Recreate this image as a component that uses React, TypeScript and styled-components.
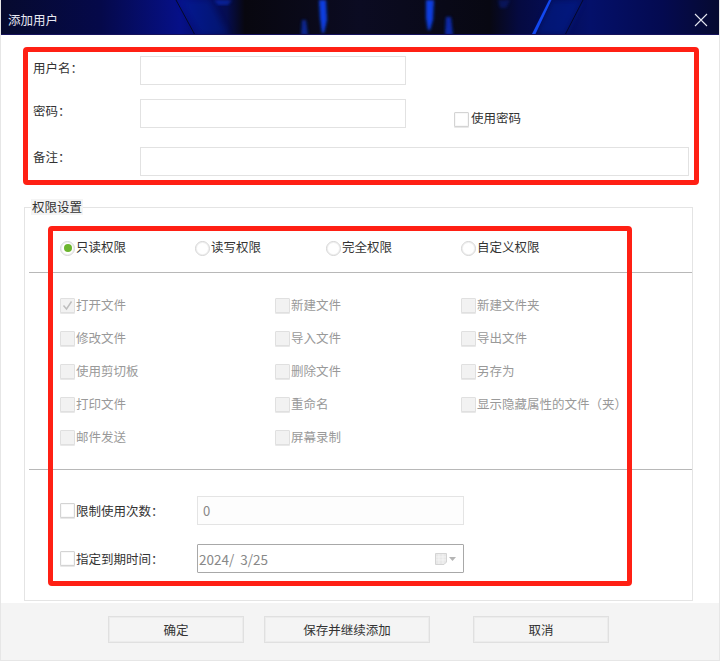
import styled, { createGlobalStyle } from "styled-components";

const FONT = `"Noto Sans CJK SC", "Inter", "Liberation Sans", sans-serif`;

const radios = [
  { label: "只读权限", checked: true },
  { label: "读写权限", checked: false },
  { label: "完全权限", checked: false },
  { label: "自定义权限", checked: false },
];

const permissions = [
  { label: "打开文件", checked: true },
  { label: "新建文件" },
  { label: "新建文件夹" },
  { label: "修改文件" },
  { label: "导入文件" },
  { label: "导出文件" },
  { label: "使用剪切板" },
  { label: "删除文件" },
  { label: "另存为" },
  { label: "打印文件" },
  { label: "重命名" },
  { label: "显示隐藏属性的文件（夹）" },
  { label: "邮件发送" },
  { label: "屏幕录制" },
];

function TitleArt() {
  return (
    <ArtSvg viewBox="0 0 720 35" preserveAspectRatio="none" aria-hidden="true">
      <defs>
        <linearGradient id="base" x1="0" x2="1" y1="0" y2="0">
          <stop offset="0" stopColor="#060a2e" />
          <stop offset="0.14" stopColor="#05094a" />
          <stop offset="0.25" stopColor="#061088" />
          <stop offset="0.315" stopColor="#050d50" />
          <stop offset="0.34" stopColor="#08070f" />
          <stop offset="0.5" stopColor="#0b0b22" />
          <stop offset="0.68" stopColor="#080812" />
          <stop offset="0.72" stopColor="#050a40" />
          <stop offset="0.82" stopColor="#04106a" />
          <stop offset="0.92" stopColor="#040a50" />
          <stop offset="1" stopColor="#060a30" />
        </linearGradient>
        <filter id="soft" x="-50%" y="-20%" width="200%" height="140%">
          <feGaussianBlur stdDeviation="1.6" />
        </filter>
        <filter id="faint" x="-20%" y="-20%" width="140%" height="140%">
          <feGaussianBlur stdDeviation="3" />
        </filter>
      </defs>
      <rect width="720" height="35" fill="url(#base)" />
      <path d="M180 0 L200 35 L228 35 L210 0 Z" fill="#0626a8" opacity="0.35" filter="url(#faint)" />
      <path d="M176 0 L195 35" stroke="#060a28" strokeWidth="1" fill="none" />
      <path d="M214 0 h18 l-4 5 h-10 Z" fill="#0a36d8" opacity="0.5" filter="url(#soft)" />
      <path d="M319 0 h7 l1 20 l-3 13 h-2 l-2 -15 Z" fill="#0a3ee0" filter="url(#soft)" />
      <path d="M302 20 h4 l2 15 h-7 Z" fill="#0a2eb0" opacity="0.8" filter="url(#soft)" />
      <path d="M426 0 h8 l-1 20 l-3 10 h-2 l-2 -12 Z" fill="#0a3ee0" filter="url(#soft)" />
      <path d="M446 17 h5 l2 18 h-8 Z" fill="#0a2ec0" opacity="0.85" filter="url(#soft)" />
      <path d="M498 0 h12 l-4 8 h-6 Z" fill="#0a28a0" opacity="0.4" filter="url(#soft)" />
      <path d="M552 0 H582 L565 35 H535 Z" fill="#0620a0" opacity="0.45" filter="url(#faint)" />
      <path d="M549 0 h2.5 L535 35 h-3.5 Z" fill="#1248f0" />
      <path d="M583 0 L565 35" stroke="#05082a" strokeWidth="1" fill="none" />
      <rect y="34" width="720" height="1" fill="#16125c" />
    </ArtSvg>
  );
}

function CalendarIcon() {
  return (
    <svg width="22" height="12" viewBox="0 0 22 12" aria-hidden="true">
      <path d="M0.5 0.5 H11.5 V9 L9 11.5 H0.5 Z" fill="#e8e8e8" stroke="#d4d4d4" />
      <path d="M1 4 H11 M1 7 H11 M4 1 V11 M8 1 V11" stroke="#f6f6f6" strokeWidth="0.8" />
      <path d="M14 4 H21 L17.5 8 Z" fill="#b5b5b5" />
    </svg>
  );
}

export default function App() {
  return (
    <>
      <GlobalStyle />
      <Window>
        <TitleBar>
          <TitleArt />
          <TitleText>添加用户</TitleText>
          <CloseIcon viewBox="0 0 14 14" aria-hidden="true">
            <path d="M1 1 L13 13 M13 1 L1 13" stroke="#e4e6f0" strokeWidth="1.1" fill="none" />
          </CloseIcon>
        </TitleBar>

        <Body>
          <FormSection>
            <FormFrame />
            <FormRow>
              <FieldLabel $offset={4}>用户名：</FieldLabel>
              <TextBox />
            </FormRow>
            <FormRow $gap={14}>
              <FieldLabel $offset={4}>密码：</FieldLabel>
              <TextBox />
              <UsePassword>
                <CheckBox />
                <OptionText>使用密码</OptionText>
              </UsePassword>
            </FormRow>
            <FormRow $gap={19}>
              <FieldLabel $offset={2}>备注：</FieldLabel>
              <TextBox $wide />
            </FormRow>
          </FormSection>

          <GroupBox>
            <GroupLegend>权限设置</GroupLegend>
            <PermissionFrame />
            <RadioRow>
              {radios.map((r) => (
                <Option key={r.label}>
                  <Radio $checked={r.checked} />
                  <OptionText>{r.label}</OptionText>
                </Option>
              ))}
            </RadioRow>
            <Divider $top={14} />
            <PermissionGrid>
              {permissions.map((p) => (
                <Option key={p.label} $muted>
                  <CheckBox $muted>
                    {p.checked && (
                      <svg width="13" height="13" viewBox="0 0 13 13" aria-hidden="true">
                        <path d="M2.5 6.5 L5.5 10 L10.5 2.5" stroke="#bdbdbd" strokeWidth="1.4" fill="none" />
                      </svg>
                    )}
                  </CheckBox>
                  <OptionText>{p.label}</OptionText>
                </Option>
              ))}
            </PermissionGrid>
            <Divider $top={15} />
            <LimitRow $top={26}>
              <LimitLabel>
                <CheckBox />
                <span>限制使用次数：</span>
              </LimitLabel>
              <CountBox>0</CountBox>
            </LimitRow>
            <LimitRow $top={19}>
              <LimitLabel>
                <CheckBox />
                <span>指定到期时间：</span>
              </LimitLabel>
              <DateBox>
                <span>2024/&nbsp;&nbsp;3/25</span>
                <CalendarIcon />
              </DateBox>
            </LimitRow>
          </GroupBox>
        </Body>

        <Footer>
          <FooterButton $width={136}>确定</FooterButton>
          <FooterButton $width={166}>保存并继续添加</FooterButton>
          <FooterButton $width={136}>取消</FooterButton>
        </Footer>
      </Window>
    </>
  );
}

const GlobalStyle = createGlobalStyle`
  html, body {
    margin: 0;
    padding: 0;
    background: #fff;
  }
  * {
    box-sizing: border-box;
  }
`;

const Window = styled.div`
  width: 720px;
  height: 661px;
  display: flex;
  flex-direction: column;
  border: 1px solid #e6e6e6;
  border-top: none;
  font-family: ${FONT};
  font-size: 12.5px;
  color: #333;
  overflow: hidden;
`;

const TitleBar = styled.div`
  position: relative;
  height: 35px;
  flex: none;
  margin: 0 -1px;
  display: flex;
  align-items: center;
  justify-content: space-between;
  padding: 5px 18px 0 8px;
`;

const ArtSvg = styled.svg`
  position: absolute;
  inset: 0;
  width: 100%;
  height: 100%;
`;

const TitleText = styled.span`
  position: relative;
  color: #e8e8f2;
  font-size: 12.5px;
  line-height: 16px;
`;

const CloseIcon = styled.svg`
  position: relative;
  width: 14px;
  height: 14px;
  margin-bottom: 1px;
  margin-right: -6px;
`;

const Body = styled.div`
  flex: none;
  display: flex;
  flex-direction: column;
`;

const FormSection = styled.section`
  position: relative;
  padding: 21px 0 0 32px;
  height: 172px;
  flex: none;
`;

const RedFrame = styled.div`
  position: absolute;
  border: 5.6px solid #ff2014;
  border-radius: 4px;
  pointer-events: none;
  z-index: 2;
`;

const FormFrame = styled(RedFrame)`
  left: 22px;
  top: 12px;
  width: 676px;
  height: 138px;
`;

const FormRow = styled.div<{ $gap?: number }>`
  display: flex;
  align-items: flex-start;
  margin-top: ${(p) => p.$gap ?? 0}px;
`;

const FieldLabel = styled.label<{ $offset: number }>`
  width: 107px;
  flex: none;
  padding-top: ${(p) => p.$offset}px;
  line-height: 16px;
`;

const TextBox = styled.div<{ $wide?: boolean }>`
  width: ${(p) => (p.$wide ? 549 : 266)}px;
  height: 29px;
  background: #fff;
  border: 1px solid #e2e2e2;
`;

const UsePassword = styled.div`
  display: flex;
  align-items: center;
  gap: 2px;
  margin: 11px 0 0 48px;
  line-height: 16px;
`;

const CheckBox = styled.span<{ $muted?: boolean }>`
  width: 15px;
  height: 15px;
  flex: none;
  display: inline-flex;
  align-items: center;
  justify-content: center;
  border: 1px solid ${(p) => (p.$muted ? "#e0e0e0" : "#d4d4d4")};
  border-radius: 1px;
  background: ${(p) => (p.$muted ? "#f2f2f2" : "#fff")};
  box-shadow: inset 0 0 0 0.5px #f2f2f2, 0 1px 0 #e8e8e8;
`;

const GroupBox = styled.section`
  position: relative;
  flex: none;
  width: 669px;
  height: 394px;
  margin-left: 23px;
  border: 1px solid #e4e4e4;
  padding-top: 30px;
`;

const GroupLegend = styled.span`
  position: absolute;
  left: 6px;
  top: -9px;
  padding: 0 1px;
  background: #f4f4f4;
  line-height: 16px;
`;

const PermissionFrame = styled(RedFrame)`
  left: 23px;
  top: 18px;
  width: 584px;
  height: 360px;
`;

const RadioRow = styled.div`
  display: grid;
  grid-template-columns: 135px 131px 135px auto;
  height: 20px;
  padding-left: 35px;
  align-items: center;
`;

const Option = styled.div<{ $muted?: boolean }>`
  display: flex;
  align-items: center;
  gap: 1px;
  white-space: nowrap;
  line-height: 16px;
  color: ${(p) => (p.$muted ? "#999" : "#333")};
`;

const OptionText = styled.span`
  padding-bottom: 2px;
`;

const Radio = styled.span<{ $checked?: boolean }>`
  width: 15px;
  height: 15px;
  flex: none;
  display: flex;
  align-items: center;
  justify-content: center;
  border: 1px solid #d4d4d4;
  border-radius: 50%;
  background: #fff;
  box-shadow: inset 0 0 0 1px #f0f0f0;

  &::after {
    content: "";
    display: ${(p) => (p.$checked ? "block" : "none")};
    width: 8px;
    height: 8px;
    border-radius: 50%;
    background: #6cb52e;
  }
`;

const Divider = styled.div<{ $top: number }>`
  height: 1px;
  margin: ${(p) => p.$top}px 0 0 4px;
  background: #b8b8b8;
`;

const PermissionGrid = styled.div`
  display: grid;
  grid-template-columns: 215px 186px auto;
  grid-auto-rows: 33px;
  align-items: center;
  margin-top: 16px;
  padding-left: 35px;
`;

const LimitRow = styled.div<{ $top: number }>`
  display: flex;
  align-items: center;
  height: 29px;
  margin-top: ${(p) => p.$top}px;
  padding-left: 35px;
`;

const LimitLabel = styled.div`
  display: flex;
  align-items: center;
  gap: 1px;
  width: 137px;
  line-height: 16px;
`;

const CountBox = styled.div`
  width: 267px;
  height: 29px;
  display: flex;
  align-items: center;
  padding-left: 5px;
  background: #fdfdfd;
  border: 1px solid #e4e4e4;
  color: #888;
  font-size: 13px;
`;

const DateBox = styled.div`
  width: 267px;
  height: 29px;
  display: flex;
  align-items: center;
  justify-content: space-between;
  padding: 0 6px 0 1px;
  background: #fff;
  border: 1px solid #a8a8a8;
  border-radius: 1px;
  color: #888;
  font-size: 13.5px;
`;

const Footer = styled.footer`
  flex: 1;
  margin-top: 2px;
  display: flex;
  align-items: flex-start;
  gap: 20px;
  padding: 13px 0 0 107px;
  background: #f4f4f4;

  & > :last-child {
    margin-left: 23px;
  }
`;

const FooterButton = styled.button<{ $width: number }>`
  width: ${(p) => p.$width}px;
  height: 27px;
  padding: 0;
  background: #f4f4f4;
  border: 1px solid #e0e0e0;
  box-shadow: inset 0 0 0 1px #ececec;
  font-family: inherit;
  font-size: 12.5px;
  color: #333;
`;
